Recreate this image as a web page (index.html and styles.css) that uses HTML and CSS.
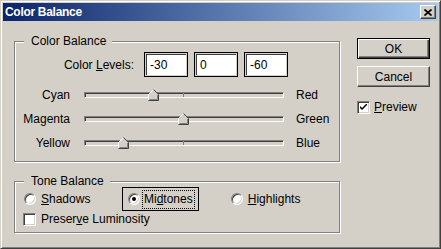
FILE: index.html
```html
<!DOCTYPE html>
<html lang="en">
<head>
  <meta charset="UTF-8">
  <title>Color Balance</title>
  <link rel="stylesheet" href="styles.css">
</head>
<body>
  <div class="window">
    <div class="titlebar">
      <span class="title">Color Balance</span>
      <span class="close-btn">
        <svg width="8" height="7" viewBox="0 0 8 7"><path d="M0.5 0.5 L7.5 6.5 M7.5 0.5 L0.5 6.5" stroke="#000" stroke-width="1.7"/></svg>
      </span>
    </div>

    <div class="content">
      <div class="left-col">
        <div class="group balance">
          <span class="legend">Color Balance</span>
          <div class="levels-row">
            <span class="levels-label">Color <u>L</u>evels:</span>
            <input class="level-input" value="-30">
            <input class="level-input" value="0">
            <input class="level-input" value="-60">
          </div>

          <div class="slider-row">
            <span class="slider-left">Cyan</span>
            <div class="track">
              <span class="tick"></span>
              <svg class="thumb" style="left: 63px" width="11" height="12" viewBox="0 0 11 12">
                <path d="M5.5 0.5 L10.5 5.5 V11.5 H0.5 V5.5 Z" fill="#d4d0c8"/>
                <path d="M0.5 11 V5.5 L5.5 0.5" stroke="#fff" fill="none"/>
                <path d="M5.5 0.5 L10.5 5.5 V11.5 H0.5" stroke="#404040" fill="none"/>
                <path d="M9.5 6 V10.5 H1.5" stroke="#808080" fill="none"/>
              </svg>
            </div>
            <span class="slider-right">Red</span>
          </div>
          <div class="slider-row">
            <span class="slider-left">Magenta</span>
            <div class="track">
              <span class="tick"></span>
              <svg class="thumb" style="left: 93px" width="11" height="12" viewBox="0 0 11 12">
                <path d="M5.5 0.5 L10.5 5.5 V11.5 H0.5 V5.5 Z" fill="#d4d0c8"/>
                <path d="M0.5 11 V5.5 L5.5 0.5" stroke="#fff" fill="none"/>
                <path d="M5.5 0.5 L10.5 5.5 V11.5 H0.5" stroke="#404040" fill="none"/>
                <path d="M9.5 6 V10.5 H1.5" stroke="#808080" fill="none"/>
              </svg>
            </div>
            <span class="slider-right">Green</span>
          </div>
          <div class="slider-row">
            <span class="slider-left">Yellow</span>
            <div class="track">
              <span class="tick"></span>
              <svg class="thumb" style="left: 33px" width="11" height="12" viewBox="0 0 11 12">
                <path d="M5.5 0.5 L10.5 5.5 V11.5 H0.5 V5.5 Z" fill="#d4d0c8"/>
                <path d="M0.5 11 V5.5 L5.5 0.5" stroke="#fff" fill="none"/>
                <path d="M5.5 0.5 L10.5 5.5 V11.5 H0.5" stroke="#404040" fill="none"/>
                <path d="M9.5 6 V10.5 H1.5" stroke="#808080" fill="none"/>
              </svg>
            </div>
            <span class="slider-right">Blue</span>
          </div>
        </div>

        <div class="group tone">
          <span class="legend">Tone Balance</span>
          <div class="radio-row">
            <label class="option shadows-opt"><span class="radio"></span><span><u>S</u>hadows</span></label>
            <label class="option mid-opt"><span class="radio checked"></span><span class="focus">Mi<u>d</u>tones</span></label>
            <label class="option high-opt"><span class="radio"></span><span><u>H</u>ighlights</span></label>
          </div>
          <div class="check-row">
            <label class="option"><span class="checkbox"></span><span>Preser<u>v</u>e Luminosity</span></label>
          </div>
        </div>
      </div>

      <div class="right-col">
        <button class="btn default">OK</button>
        <button class="btn">Cancel</button>
        <label class="option preview">
          <span class="checkbox">
            <svg width="7" height="7" viewBox="0 0 7 7"><path d="M0 2 L0 4 L2 6 L7 1 L7 -1 L2 4 Z" fill="#000"/></svg>
          </span>
          <span><u>P</u>review</span>
        </label>
      </div>
    </div>
  </div>
</body>
</html>
```

FILE: styles.css
```css
:root {
  --face: #d4d0c8;
  --shadow: #808080;
  --dark: #404040;
}

body {
  margin: 0;
  background: var(--face);
  font-family: "Liberation Sans", Arial, sans-serif;
  font-size: 12px;
  color: #000;
}

.window {
  width: 441px;
  height: 249px;
  box-sizing: border-box;
  border: 1px solid;
  border-color: var(--face) var(--dark) var(--dark) var(--face);
  box-shadow: inset 1px 1px 0 #fff, inset -1px -1px 0 var(--shadow);
  padding: 2px;
  background: var(--face);
}

.titlebar {
  height: 18px;
  display: flex;
  align-items: center;
  justify-content: space-between;
  background: linear-gradient(to right, #0a246a, #a6caf0);
}

.title {
  color: #fff;
  font-weight: bold;
  font-size: 12px;
  padding-left: 2px;
  letter-spacing: -0.3px;
}

.close-btn {
  width: 16px;
  height: 14px;
  box-sizing: border-box;
  margin-right: 2px;
  background: var(--face);
  border: 1px solid;
  border-color: #fff var(--dark) var(--dark) #fff;
  box-shadow: inset -1px -1px 0 var(--shadow);
  display: flex;
  align-items: center;
  justify-content: center;
}

.content {
  display: flex;
  align-items: flex-start;
  padding-left: 11px;
}

.left-col {
  width: 326px;
  margin-top: 20px;
}

/* etched group frame */
.group {
  position: relative;
  border: 1px solid var(--shadow);
  box-shadow: 1px 1px 0 #fff, inset 1px 1px 0 #fff;
}

.legend {
  position: absolute;
  top: -8px;
  left: 9px;
  line-height: 14px;
  padding: 0 6px 0 7px;
  background: var(--face);
}

.balance {
  padding: 10px 0 6px;
}

.tone {
  margin-top: 19px;
  padding: 5px 0 5px;
}

.levels-row {
  display: flex;
  justify-content: flex-end;
  align-items: center;
  gap: 6px;
  height: 25px;
  padding-right: 51px;
  margin-bottom: 6px;
}

.levels-label {
  margin-right: 4px;
}

.level-input {
  width: 44px;
  height: 25px;
  box-sizing: border-box;
  padding: 0 0 0 5px;
  font: inherit;
  border: 1px solid #000;
  background: #fff;
  outline: none;
  box-shadow: inset 1px 1px 0 var(--face), inset -1px -1px 0 var(--face), inset 2px 2px 0 var(--dark), inset -2px -2px 0 #fff;
}

.slider-row {
  display: flex;
  align-items: center;
  height: 24px;
}

.slider-left {
  width: 55px;
  text-align: right;
  margin-right: 14px;
}

.track {
  position: relative;
  width: 200px;
  height: 6px;
  box-sizing: border-box;
  border: 1px solid;
  border-color: var(--shadow) #fff #fff var(--shadow);
  box-shadow: inset 1px 1px 0 var(--dark);
  background: var(--face);
}

.tick {
  position: absolute;
  left: 98px;
  top: 0;
  width: 1px;
  height: 4px;
  background: var(--shadow);
}

.thumb {
  position: absolute;
  top: -4px;
  display: block;
}

.slider-right {
  margin-left: 12px;
}

.radio-row {
  display: flex;
  align-items: center;
  height: 24px;
  padding-left: 9px;
}

.option {
  display: flex;
  align-items: center;
  gap: 5px;
}

.shadows-opt {
  width: 98px;
}

.mid-opt {
  height: 24px;
  box-sizing: border-box;
  border: 1px solid #000;
  padding: 0 3px 0 5px;
  gap: 2px;
}

.focus {
  border: 1px dotted #000;
  padding: 1px 1px 2px;
  line-height: 14px;
}

.high-opt {
  margin-left: 32px;
}

.radio {
  width: 12px;
  height: 12px;
  box-sizing: border-box;
  border-radius: 50%;
  border: 1px solid;
  border-color: var(--shadow) #fff #fff var(--shadow);
  box-shadow: inset 1px 1px 0 var(--dark), inset -1px -1px 0 var(--face);
  background: #fff;
  display: flex;
  align-items: center;
  justify-content: center;
}

.radio.checked::after {
  content: "";
  width: 4px;
  height: 4px;
  border-radius: 50%;
  background: #000;
}

.check-row {
  display: flex;
  align-items: center;
  height: 16px;
  padding-left: 8px;
}

.checkbox {
  width: 13px;
  height: 13px;
  box-sizing: border-box;
  border: 1px solid;
  border-color: var(--shadow) #fff #fff var(--shadow);
  box-shadow: inset 1px 1px 0 var(--dark), inset -1px -1px 0 var(--face);
  background: #fff;
  display: flex;
  align-items: center;
  justify-content: center;
}

.right-col {
  display: flex;
  flex-direction: column;
  align-items: flex-start;
  margin-left: 17px;
  margin-top: 17px;
}

.btn {
  width: 73px;
  height: 21px;
  box-sizing: border-box;
  padding: 0;
  font: inherit;
  color: #000;
  background: var(--face);
  border: 1px solid;
  border-color: #fff var(--dark) var(--dark) #fff;
  box-shadow: inset -1px -1px 0 var(--shadow);
  margin-bottom: 7px;
}

.btn.default {
  border-color: #000;
  box-shadow: inset 1px 1px 0 #fff, inset -1px -1px 0 var(--dark), inset -2px -2px 0 var(--shadow);
}

.preview {
  margin-top: 6px;
  gap: 4px;
}
```
